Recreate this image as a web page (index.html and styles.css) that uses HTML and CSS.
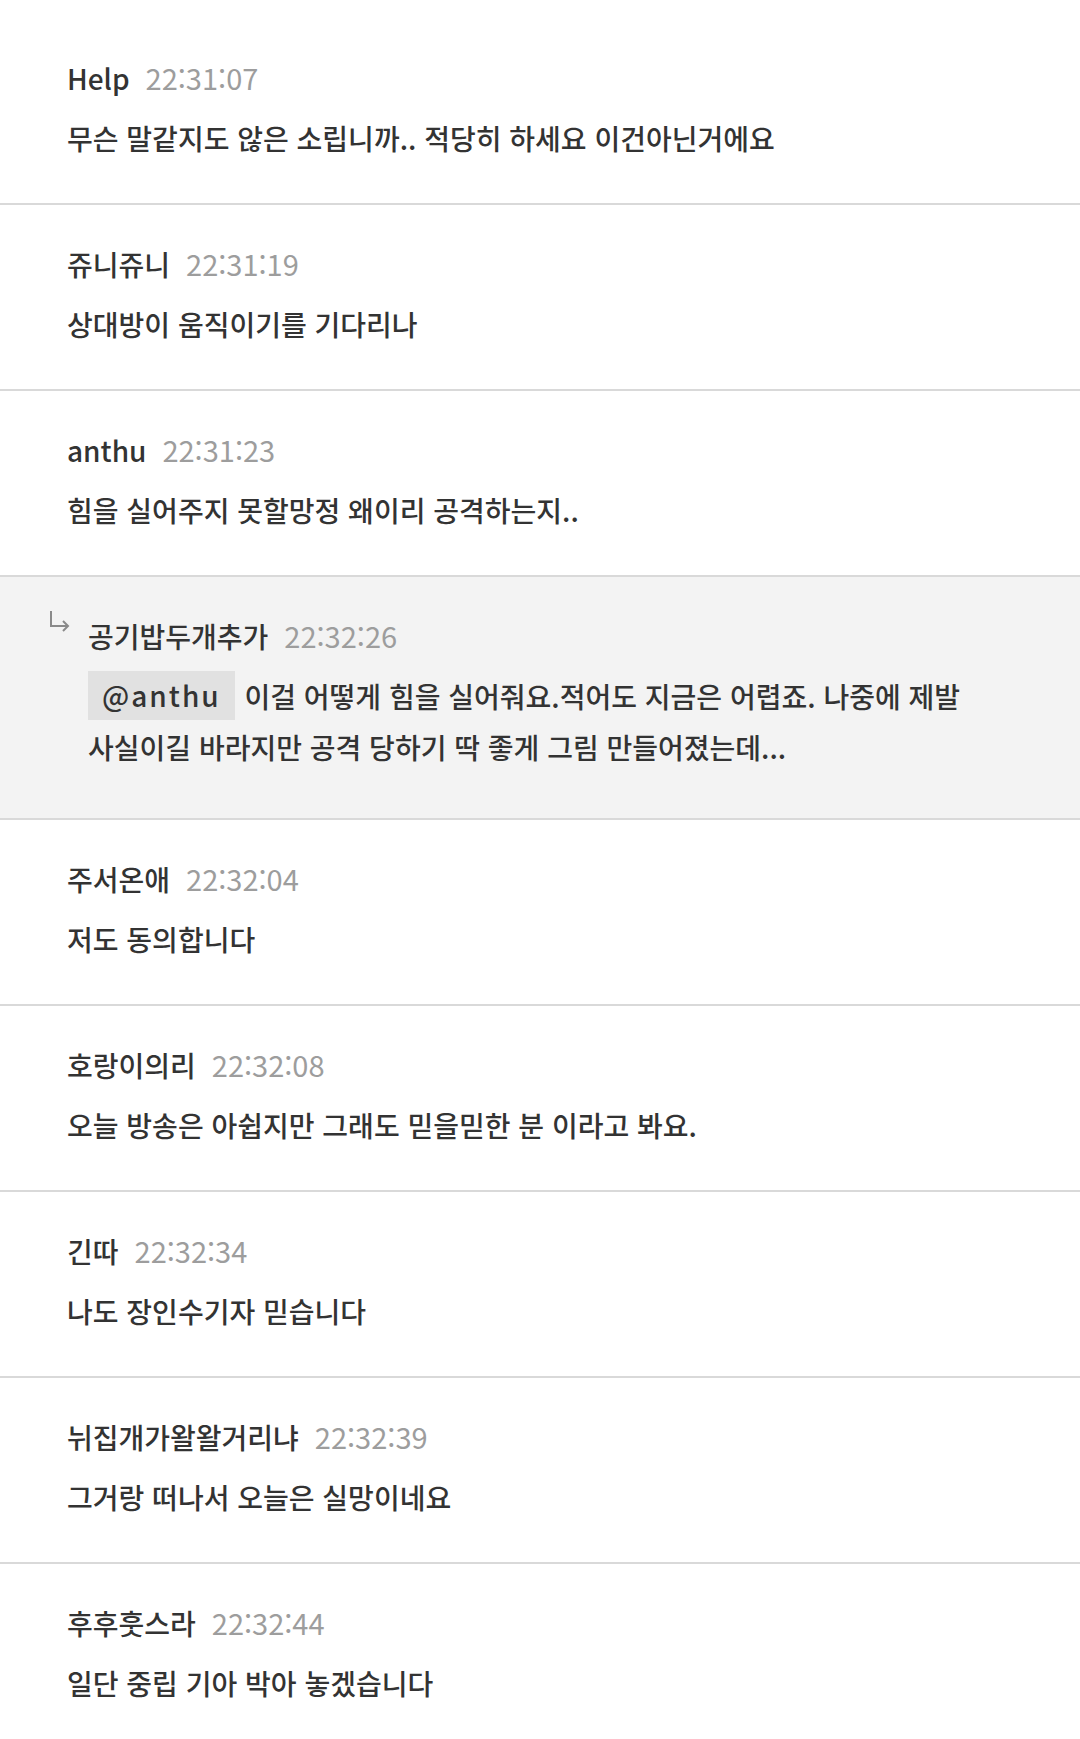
FILE: index.html
```html
<!DOCTYPE html>
<html lang="ko">
<head>
<meta charset="utf-8">
<title>댓글</title>
<link rel="stylesheet" href="styles.css">
</head>
<body>
<ul class="comments">
  <li class="comment">
    <div class="head"><span class="name">Help</span><span class="time">22:31:07</span></div>
    <p class="body">무슨 말같지도 않은 소립니까.. 적당히 하세요 이건아닌거에요</p>
  </li>
  <li class="comment">
    <div class="head"><span class="name">쥬니쥬니</span><span class="time">22:31:19</span></div>
    <p class="body">상대방이 움직이기를 기다리나</p>
  </li>
  <li class="comment">
    <div class="head"><span class="name">anthu</span><span class="time">22:31:23</span></div>
    <p class="body">힘을 실어주지 못할망정 왜이리 공격하는지..</p>
  </li>
  <li class="comment reply">
    <svg class="reply-icon" width="24" height="22" viewBox="0 0 24 22" aria-hidden="true">
      <path d="M3 1 V16 H20" fill="none" stroke="#8a8a8a" stroke-width="2"/>
      <path d="M15 11 L20 16 L15 21" fill="none" stroke="#8a8a8a" stroke-width="2"/>
    </svg>
    <div class="reply-main">
      <div class="head"><span class="name">공기밥두개추가</span><span class="time">22:32:26</span></div>
      <p class="body"><span class="mention">@anthu</span> 이걸 어떻게 힘을 실어줘요.적어도 지금은 어렵죠. 나중에 제발 사실이길 바라지만 공격 당하기 딱 좋게 그림 만들어졌는데...</p>
    </div>
  </li>
  <li class="comment">
    <div class="head"><span class="name">주서온애</span><span class="time">22:32:04</span></div>
    <p class="body">저도 동의합니다</p>
  </li>
  <li class="comment">
    <div class="head"><span class="name">호랑이의리</span><span class="time">22:32:08</span></div>
    <p class="body">오늘 방송은 아쉽지만 그래도 믿을믿한 분 이라고 봐요.</p>
  </li>
  <li class="comment">
    <div class="head"><span class="name">긴따</span><span class="time">22:32:34</span></div>
    <p class="body">나도 장인수기자 믿습니다</p>
  </li>
  <li class="comment">
    <div class="head"><span class="name">뉘집개가왈왈거리냐</span><span class="time">22:32:39</span></div>
    <p class="body">그거랑 떠나서 오늘은 실망이네요</p>
  </li>
  <li class="comment">
    <div class="head"><span class="name">후후훗스라</span><span class="time">22:32:44</span></div>
    <p class="body">일단 중립 기아 박아 놓겠습니다</p>
  </li>
</ul>
</body>
</html>
```

FILE: styles.css
```css
html, body {
  margin: 0;
  padding: 0;
  background: #ffffff;
}

body {
  font-family: "Noto Sans CJK KR", "Noto Sans", sans-serif;
  font-weight: 500;
  color: #333333;
  width: 1080px;
  overflow: hidden;
}

.comments {
  list-style: none;
  margin: 0;
  padding: 19px 0 0 0;
}

.comment {
  box-sizing: border-box;
  height: 186px;
  padding: 38px 30px 0 67px;
  border-bottom: 2px solid #d9d9d9;
}

.head {
  display: flex;
  align-items: baseline;
  height: 40px;
  line-height: 40px;
}

.name {
  font-size: 28px;
  color: #333333;
}

.time {
  font-size: 29px;
  font-weight: 400;
  color: #9d9d9d;
  margin-left: 16px;
}

.body {
  margin: 16px 0 0 0;
  font-size: 28px;
  line-height: 51px;
  color: #333333;
  word-break: keep-all;
}

.reply {
  display: flex;
  height: 243px;
  padding-left: 48px;
  background: #f3f3f3;
}

.reply-icon {
  flex: none;
  margin-top: -5px;
  margin-right: 16px;
}

.reply-main {
  flex: 1;
  min-width: 0;
}

.mention {
  display: inline-block;
  background: #e1e1e1;
  padding: 0 14px;
  height: 49px;
  line-height: 49px;
  letter-spacing: 2px;
  vertical-align: top;
  margin-right: 2px;
}
```
